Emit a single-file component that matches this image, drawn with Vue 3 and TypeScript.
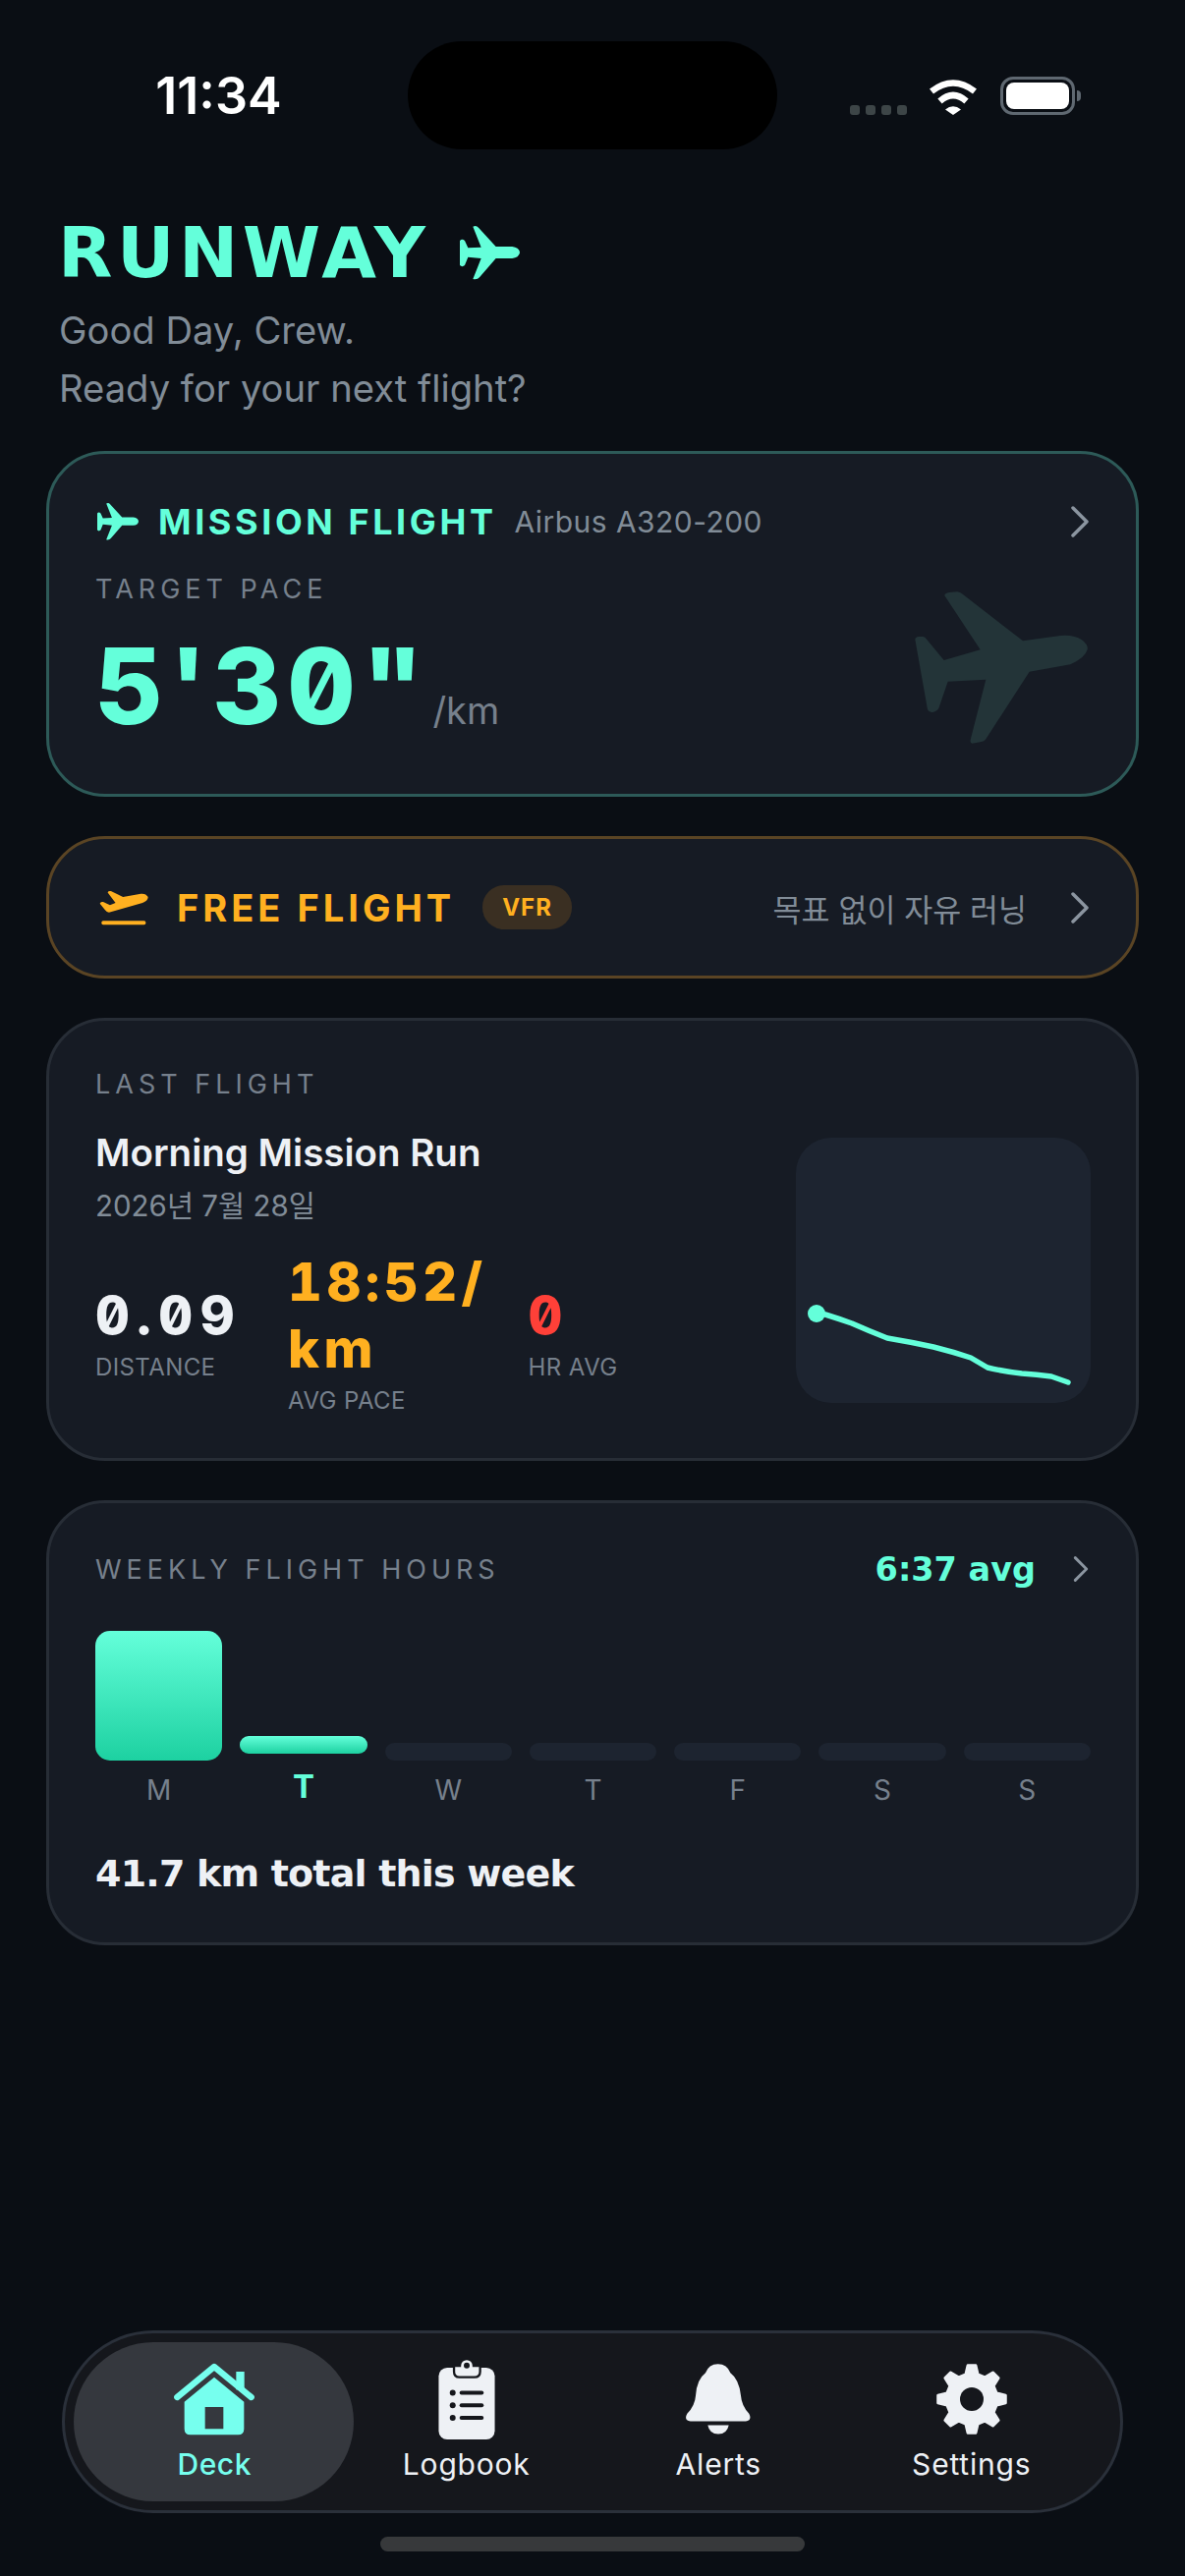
<script setup lang="ts">
const days = [
  { label: 'M', height: 132, kind: 'full' },
  { label: 'T', height: 18, kind: 'today' },
  { label: 'W', height: 18, kind: 'empty' },
  { label: 'T', height: 18, kind: 'empty' },
  { label: 'F', height: 18, kind: 'empty' },
  { label: 'S', height: 18, kind: 'empty' },
  { label: 'S', height: 18, kind: 'empty' },
]

const planePath =
  'M1265 27Q1275 22 1282 30L1335 88H1385Q1408 92 1408 107Q1405 122 1385 124H1335L1285 182Q1278 190 1265 187L1290 124L1250 120L1240 145Q1232 152 1225 145V70Q1232 62 1240 70L1250 92L1290 90Z'

// 8 toothed gear, centred on 0,0
function gearPath(): string {
  const pts: string[] = []
  const teeth = 8
  for (let i = 0; i < teeth; i++) {
    const a = (i / teeth) * Math.PI * 2 - Math.PI / 2
    const step = Math.PI / teeth
    const corners: [number, number][] = [
      [78, a - step * 0.62],
      [104, a - step * 0.3],
      [104, a + step * 0.3],
      [78, a + step * 0.62],
    ]
    for (const [r, t] of corners) {
      pts.push(`${(Math.cos(t) * r).toFixed(1)} ${(Math.sin(t) * r).toFixed(1)}`)
    }
  }
  return `M${pts.join('L')}Z M36 0A36 36 0 1 0 -36 0A36 36 0 1 0 36 0Z`
}
const gear = gearPath()
</script>

<template>
  <div class="screen">
    <header class="status">
      <div class="status-left"><span class="clock">11:34</span></div>
      <div class="island"></div>
      <div class="status-right">
        <div class="signal"><i></i><i></i><i></i><i></i></div>
        <svg class="wifi" width="50" height="37" viewBox="0 0 50 37">
          <path d="M3 13Q25 -4 47 13" fill="none" stroke="#fff" stroke-width="6.5" stroke-linejoin="round" />
          <path d="M11.5 23Q25 11 38.5 23" fill="none" stroke="#fff" stroke-width="6.5" />
          <path d="M17 31.5Q25 25 33 31.5L25 37Z" fill="#fff" />
        </svg>
        <div class="battery"><div class="battery-fill"></div></div>
      </div>
    </header>

    <section class="intro">
      <h1 class="brand">
        RUNWAY
        <svg class="brand-plane" width="61" height="55" viewBox="1225 25 183 165"><path :d="planePath" /></svg>
      </h1>
      <p class="greeting">Good Day, Crew.<br />Ready for your next flight?</p>
    </section>

    <main class="cards">
      <section class="card mission">
        <div class="mission-head">
          <svg class="mission-plane" width="42" height="38" viewBox="1225 25 183 165"><path :d="planePath" /></svg>
          <span class="mission-title">MISSION FLIGHT</span>
          <span class="mission-type">Airbus A320-200</span>
          <svg class="chevron" width="18" height="32" viewBox="0 0 18 32"><path d="M2 2L16 16L2 30" /></svg>
        </div>
        <div class="label target">TARGET PACE</div>
        <div class="pace">
          <span class="pace-value">5'30"</span>
          <span class="pace-unit">/km</span>
        </div>
        <svg class="ghost-plane" width="176" height="155" viewBox="215 127 528 465">
          <path d="M306 140Q306 132 320 130L345 128Q355 130 362 136L545 278L660 262Q700 258 725 275Q745 290 742 305Q735 330 690 350L565 372L432 578Q428 585 415 587L390 591Q383 590 385 580L432 396L316 402L288 484Q284 492 270 496Q258 498 254 488L216 274Q216 266 228 265L240 265Q247 266 250 272L304 337L415 305Z" />
        </svg>
      </section>

      <section class="card free">
        <svg class="free-icon" width="50" height="36" viewBox="62 139 151 108">
          <path d="M88 146Q90 140 98 142L135 160L190 150Q205 148 212 160Q212 172 195 178L92 207Q85 207 80 200L64 180Q66 173 74 175L95 185L112 178Z" />
          <rect x="69" y="233" width="136" height="12" rx="5" />
        </svg>
        <span class="free-title">FREE FLIGHT</span>
        <span class="vfr">VFR</span>
        <span class="free-note">목표 없이 자유 러닝</span>
        <svg class="chevron" width="18" height="32" viewBox="0 0 18 32"><path d="M2 2L16 16L2 30" /></svg>
      </section>

      <section class="card last">
        <div class="label">LAST FLIGHT</div>
        <div class="last-body">
          <div class="last-info">
            <div class="last-name">Morning Mission Run</div>
            <div class="last-date">2026년 7월 28일</div>
            <div class="stats">
              <div class="stat">
                <div class="stat-value distance">0.09</div>
                <div class="stat-label">DISTANCE</div>
              </div>
              <div class="stat pace-stat">
                <div class="stat-value amber">18:52/<br />km</div>
                <div class="stat-label">AVG PACE</div>
              </div>
              <div class="stat">
                <div class="stat-value red">0</div>
                <div class="stat-label">HR AVG</div>
              </div>
            </div>
          </div>
          <div class="chart">
            <svg width="300" height="270" viewBox="0 0 300 270">
              <path
                d="M21 179L30 180Q43 184 57 189Q75 197 93 204Q117 208 140 213Q160 218 178 224L195 234Q212 238 230 240Q245 241 260 243L277 249"
                fill="none"
                stroke="#64ffda"
                stroke-width="5.5"
                stroke-linecap="round"
                stroke-linejoin="round"
              />
              <circle cx="21" cy="179" r="9" fill="#64ffda" />
            </svg>
          </div>
        </div>
      </section>

      <section class="card weekly">
        <div class="weekly-head">
          <div class="label">WEEKLY FLIGHT HOURS</div>
          <span class="weekly-avg">6:37 avg</span>
          <svg class="chevron small" width="16" height="26" viewBox="0 0 18 32"><path d="M2 2L16 16L2 30" /></svg>
        </div>
        <div class="bars">
          <div v-for="(d, i) in days" :key="i" class="bar-col">
            <div class="bar" :class="d.kind" :style="{ height: d.height + 'px' }"></div>
            <div class="bar-label" :class="{ today: d.kind === 'today' }">{{ d.label }}</div>
          </div>
        </div>
        <div class="weekly-total">41.7 km total this week</div>
      </section>
    </main>

    <nav class="tabbar">
      <div class="tab active">
        <svg class="tab-icon" width="82" height="73" viewBox="320 115 246 218">
          <rect x="510" y="140" width="25" height="55" fill="#76ffee" />
          <path d="M330 218L443 125L556 218" fill="none" stroke="#76ffee" stroke-width="19" stroke-linecap="round" stroke-linejoin="round" />
          <path fill-rule="evenodd" fill="#76ffee" d="M352 232L443 157L534 232V315Q534 333 516 333H370Q352 333 352 315ZM415 248V315H471V248Z" />
        </svg>
        <span>Deck</span>
      </div>
      <div class="tab">
        <svg class="tab-icon" width="58" height="82" viewBox="1128 95 172 247">
          <rect x="1128" y="122" width="172" height="220" rx="26" fill="#eef1f5" />
          <path d="M1175 116H1193A21 21 0 0 1 1235 116H1255V134Q1255 151 1238 151H1192Q1175 151 1175 134Z" fill="#eef1f5" stroke="#15171c" stroke-width="7" />
          <circle cx="1214" cy="115" r="9" fill="#15171c" />
          <g fill="#15171c">
            <circle cx="1171" cy="199" r="9" />
            <circle cx="1171" cy="237" r="9" />
            <circle cx="1171" cy="276" r="9" />
            <rect x="1192" y="193" width="74" height="12" rx="6" />
            <rect x="1192" y="231" width="74" height="12" rx="6" />
            <rect x="1192" y="270" width="74" height="12" rx="6" />
          </g>
        </svg>
        <span>Logbook</span>
      </div>
      <div class="tab">
        <svg class="tab-icon" width="66" height="72" viewBox="172 118 198 215">
          <path fill="#eef1f5" d="M270 118Q298 118 308 145Q335 165 340 215Q342 245 365 270Q375 290 355 293H186Q165 290 176 270Q200 245 202 215Q205 165 232 145Q242 118 270 118Z" />
          <path fill="#eef1f5" d="M239 305H303Q298 332 271 332Q244 332 239 305Z" />
        </svg>
        <span>Alerts</span>
      </div>
      <div class="tab">
        <svg class="tab-icon" width="72" height="72" viewBox="-108 -108 216 216">
          <path :d="gear" fill="#eef1f5" fill-rule="evenodd" stroke="#eef1f5" stroke-width="8" stroke-linejoin="round" />
          <circle r="36" fill="#15171c" />
        </svg>
        <span>Settings</span>
      </div>
    </nav>
    <div class="home-bar"></div>
  </div>
</template>

<style scoped>
.screen {
  width: 1206px;
  height: 2622px;
  display: flex;
  flex-direction: column;
  background: #0a0e14;
  font-family: Inter, 'Noto Sans CJK KR', sans-serif;
  color: #eef1f5;
  overflow: hidden;
}

.status {
  display: flex;
  align-items: center;
  height: 110px;
  margin-top: 42px;
}

.status-left {
  width: 415px;
  padding-left: 30px;
  box-sizing: border-box;
  text-align: center;
}

.clock {
  font-size: 52px;
  font-weight: 600;
  color: #fff;
}

.island {
  width: 376px;
  height: 110px;
  border-radius: 55px;
  background: #000;
}

.status-right {
  display: flex;
  align-items: flex-end;
  padding-left: 74px;
}

.signal {
  display: flex;
  gap: 6px;
  margin-right: 22px;
}

.signal i {
  width: 10px;
  height: 10px;
  border-radius: 3px;
  background: #3d4547;
}

.wifi {
  margin-right: 23px;
}

.battery {
  position: relative;
  width: 76px;
  height: 39px;
  box-sizing: border-box;
  padding: 3px;
  border: 3px solid #5f6871;
  border-radius: 13px;
}

.battery::after {
  content: '';
  position: absolute;
  right: -9px;
  top: 11px;
  width: 4px;
  height: 11px;
  border-radius: 0 4px 4px 0;
  background: #5f6871;
}

.battery-fill {
  height: 100%;
  border-radius: 8px;
  background: #fff;
}

.intro {
  padding: 73px 60px 0;
}

.brand {
  display: flex;
  align-items: center;
  gap: 31px;
  height: 64px;
  margin: 0 0 0 -1px;
  font-family: 'DejaVu Sans', sans-serif;
  font-size: 72px;
  font-weight: 700;
  letter-spacing: 4.5px;
  color: #64ffda;
}

.brand-plane {
  fill: #64ffda;
}

.greeting {
  margin: 18px 0 0;
  font-size: 38.2px;
  line-height: 59px;
  color: #818c97;
}

.cards {
  display: flex;
  flex-direction: column;
  gap: 40px;
  margin-top: 34px;
  padding: 0 47px;
}

.card {
  position: relative;
  box-sizing: border-box;
  padding: 46px 46px 46px 47px;
  border: 3px solid #272d36;
  border-radius: 60px;
  background: #161b24;
}

.chevron {
  flex: none;
  fill: none;
  stroke: #8b95a0;
  stroke-width: 3.5;
  stroke-linecap: round;
  stroke-linejoin: round;
}

.label {
  font-size: 27px;
  line-height: 33px;
  letter-spacing: 5px;
  color: #76808c;
}

.mission {
  height: 352px;
  padding-top: 48px;
  border-color: #2d5a58;
}

.mission-head {
  display: flex;
  align-items: center;
  height: 42px;
}

.mission-plane {
  flex: none;
  margin-left: 2px;
  fill: #64ffda;
}

.mission-title {
  margin-left: 20px;
  font-size: 36px;
  font-weight: 700;
  letter-spacing: 3.6px;
  color: #64ffda;
}

.mission-type {
  margin-left: 18px;
  font-size: 30px;
  letter-spacing: 0.45px;
  color: #818c97;
}

.mission-head .chevron {
  margin-left: auto;
  margin-right: 2px;
}

.target {
  margin-top: 31px;
}

.pace {
  display: flex;
  align-items: baseline;
  margin-top: 29px;
}

.pace-value {
  font-size: 107px;
  line-height: 107px;
  font-weight: 800;
  font-feature-settings: 'zero' 1, 'tnum' 1;
  letter-spacing: 6.5px;
  color: #64ffda;
}

.pace-unit {
  margin-left: 3px;
  font-size: 38px;
  color: #76808c;
}

.ghost-plane {
  position: absolute;
  right: 49px;
  top: 140px;
  fill: #233438;
}

.free {
  display: flex;
  align-items: center;
  height: 145px;
  padding-top: 0;
  padding-bottom: 0;
  border-color: #5a4424;
}

.free-icon {
  flex: none;
  margin-left: 4px;
  fill: #ffb020;
}

.free-title {
  margin-left: 29px;
  font-size: 38px;
  font-weight: 700;
  letter-spacing: 4px;
  color: #ffb020;
}

.vfr {
  margin-left: 28px;
  padding: 0 20px;
  height: 45px;
  line-height: 45px;
  border-radius: 22px;
  background: #3a2f22;
  font-size: 24px;
  font-weight: 700;
  letter-spacing: 1px;
  color: #ffb020;
}

.free-note {
  margin-left: auto;
  margin-right: 45px;
  font-size: 31.5px;
  color: #818c97;
}

.free .chevron {
  margin-right: 2px;
}

.last {
  height: 451px;
  padding-top: 48px;
}

.last-body {
  display: flex;
  justify-content: space-between;
}

.last-info {
  margin-top: 29px;
}

.last-name {
  font-size: 38.5px;
  line-height: 48px;
  font-weight: 600;
}

.last-date {
  margin-top: 9px;
  font-size: 29.5px;
  line-height: 42px;
  color: #818c97;
}

.stats {
  display: flex;
  align-items: center;
  gap: 47px;
  margin-top: 23px;
}

.stat-value {
  font-size: 54px;
  line-height: 68px;
  font-weight: 800;
  font-feature-settings: 'zero' 1, 'tnum' 1;
  letter-spacing: 5px;
}

.stat-value.distance {
  letter-spacing: 7.5px;
}

.pace-stat {
  margin-right: -5px;
}

.pace-stat .stat-value {
  letter-spacing: 4.5px;
}

.stat-label {
  margin-top: 4px;
  font-size: 24px;
  line-height: 30px;
  letter-spacing: 0.4px;
  color: #76808c;
}

.amber {
  color: #ffb020;
}

.red {
  color: #ff4038;
}

.chart {
  flex: none;
  width: 300px;
  height: 270px;
  margin-top: 38px;
  border-radius: 36px;
  background: #1d2430;
}

.weekly {
  height: 453px;
}

.weekly-head {
  display: flex;
  align-items: center;
  height: 42px;
}

.weekly-avg {
  margin-left: auto;
  font-family: 'DejaVu Sans', sans-serif;
  font-size: 33.5px;
  font-weight: 700;
  color: #64ffda;
}

.weekly-head .chevron {
  margin-left: 38px;
  margin-right: 2px;
}

.bars {
  display: grid;
  grid-template-columns: repeat(7, 1fr);
  gap: 18px;
  margin-top: 42px;
}

.bar-col {
  display: flex;
  flex-direction: column;
  justify-content: flex-end;
  align-items: stretch;
}

.bar {
  border-radius: 12px;
  background: #1d2430;
}

.bar.full,
.bar.today {
  background: linear-gradient(180deg, #64ffda, #1dd1a1);
}

.bar.full {
  border-radius: 15px;
}

.bar.today {
  transform: translateY(-7px);
}

.bar-label {
  margin-top: 12px;
  font-size: 28px;
  line-height: 36px;
  text-align: center;
  color: #76808c;
}

.bar-label.today {
  transform: translateY(-4px);
  font-size: 33px;
  font-weight: 700;
  color: #64ffda;
}

.weekly-total {
  margin-top: 44px;
  font-family: 'DejaVu Sans', sans-serif;
  font-size: 38px;
  line-height: 46px;
  font-weight: 700;
  letter-spacing: -0.8px;
}

.tabbar {
  display: flex;
  box-sizing: border-box;
  height: 186px;
  margin: auto 63px 0 63px;
  padding: 9px 24px;
  border: 3px solid #2a303a;
  border-radius: 93px;
  background: #15171c;
}

.tab {
  position: relative;
  width: 257px;
  height: 162px;
  box-sizing: border-box;
  padding-top: 17px;
  display: flex;
  flex-direction: column;
  align-items: center;
  font-size: 30px;
  font-weight: 400;
  letter-spacing: 0.8px;
  line-height: 36px;
}

.tab:last-child {
  transform: translateX(1px);
}

.tab.active {
  color: #76ffee;
  font-weight: 500;
  letter-spacing: 0.5px;
}

.tab.active::before {
  content: '';
  position: absolute;
  left: -15px;
  right: -13px;
  top: 0;
  bottom: 0;
  border-radius: 81px;
  background: #35383e;
}

.tab-icon,
.tab span {
  position: relative;
}

.tab-icon {
  height: 82px;
  margin-bottom: 7px;
}

.home-bar {
  flex: none;
  width: 432px;
  height: 15px;
  margin: 24px auto 25px;
  border-radius: 8px;
  background: #37393b;
}
</style>

<style>
html,
body {
  margin: 0;
  background: #0a0e14;
}
</style>
